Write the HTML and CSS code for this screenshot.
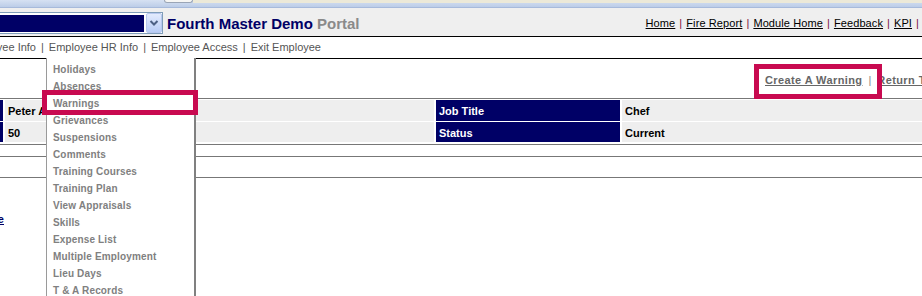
FILE: index.html
```html
<!DOCTYPE html>
<html>
<head>
<meta charset="utf-8">
<title>Fourth Master Demo Portal</title>
<link rel="stylesheet" href="styles.css">
</head>
<body>
<div class="page">
  <div class="chrome">
    <div class="chrome-top">
      <div class="ct-left"></div>
      <div class="ct-tab"></div>
      <div class="ct-right"></div>
    </div>
  </div>

  <header class="header">
    <div class="select">
      <div class="select-value"></div>
      <div class="select-btn">
        <svg width="16" height="20" viewBox="0 0 16 20"><path d="M4.5 8 L8 11.5 L11.5 8" fill="none" stroke="#4d6185" stroke-width="2"/></svg>
      </div>
    </div>
    <div class="title">Fourth Master Demo <span class="portal">Portal</span></div>
    <nav class="toplinks">
      <a href="#">Home</a><span class="tsep">|</span>
      <a href="#">Fire Report</a><span class="tsep">|</span>
      <a href="#">Module Home</a><span class="tsep">|</span>
      <a href="#">Feedback</a><span class="tsep">|</span>
      <a href="#">KPI</a><span class="tsep">|</span>
    </nav>
  </header>

  <nav class="subnav">
    <span class="sub-first">Employee Info</span><span>|</span>
    <span>Employee HR Info</span><span>|</span>
    <span>Employee Access</span><span>|</span>
    <span>Exit Employee</span>
  </nav>

  <main class="content">
    <div class="actions">
      <a href="#">Create A Warning</a><span class="asep">|</span><a href="#">Return To List</a>
    </div>
    <div class="details">
      <div class="lbl">Name</div><div class="val">Peter Andrews</div><div class="lbl">Job Title</div><div class="val">Chef</div>
      <div class="lbl">Employee No</div><div class="val">50</div><div class="lbl">Status</div><div class="val">Current</div>
    </div>
    <div class="gap-a"></div>
    <div class="gap-b"></div>
    <div class="back-row"><a href="#">Back to Employee</a></div>
  </main>

  <ul class="menu">
    <li>Holidays</li>
    <li>Absences</li>
    <li>Warnings</li>
    <li>Grievances</li>
    <li>Suspensions</li>
    <li>Comments</li>
    <li>Training Courses</li>
    <li>Training Plan</li>
    <li>View Appraisals</li>
    <li>Skills</li>
    <li>Expense List</li>
    <li>Multiple Employment</li>
    <li>Lieu Days</li>
    <li>T &amp; A Records</li>
    <li>Documents</li>
  </ul>

  <div class="mark mark-menu"></div>
  <div class="mark mark-action"></div>
</div>
</body>
</html>
```

FILE: styles.css
```css
html, body {
  margin: 0;
  padding: 0;
  height: 296px;
  overflow: hidden;
  background: #fff;
}
body {
  font-family: "Liberation Sans", Arial, sans-serif;
  font-size: 11px;
  color: #000;
}
.page {
  position: relative;
  width: 922px;
  height: 296px;
  overflow: hidden;
}

/* browser-like strip at the very top */
.chrome {
  height: 8px;
  box-sizing: border-box;
  background: linear-gradient(#d6e1f2, #bccde8);
  border-bottom: 1px solid #a7badb;
}
.chrome-top {
  display: flex;
  height: 3px;
}
.ct-left { width: 164px; }
.ct-tab {
  width: 29px;
  box-sizing: border-box;
  background: #f6f6f4;
  border: 1px solid #9aa5b6;
  border-top: 0;
  border-radius: 0 0 3px 3px;
}
.ct-right { flex: 1; background: #ece9d8; }

/* header */
.header {
  display: flex;
  align-items: flex-start;
  height: 28px;
  background: #efefef;
  border-bottom: 1px solid #000;
}
.select {
  display: flex;
  margin-top: 4px;
  margin-left: -60px;
  width: 223px;
  height: 22px;
  box-sizing: border-box;
  border: 1px solid #7f9db9;
  background: #fff;
}
.select-value {
  flex: 1;
  margin: 2px 0 1px 0;
  background: #000066;
}
.select-btn {
  width: 16px;
  height: 20px;
  margin-left: 2px;
  box-sizing: border-box;
  border-radius: 2px;
  background: linear-gradient(#e3ebfd, #b9cdf6);
  border: 1px solid #b7c8ee;
}
.select-btn svg { display: block; margin: -1px 0 0 -1px; }
.title {
  margin-left: 4px;
  margin-top: 7px;
  font-size: 15px;
  line-height: 17px;
  font-weight: bold;
  color: #000066;
  white-space: nowrap;
}
.portal { color: #8a8a8a; }
.toplinks {
  display: flex;
  gap: 4px;
  margin-left: auto;
  margin-top: 9px;
  padding-right: 3px;
  line-height: 13px;
  white-space: nowrap;
  letter-spacing: 0.1px;
}
.toplinks a { color: #000; text-decoration: underline; }
.tsep { color: #7a1040; }

/* sub navigation */
.subnav {
  display: flex;
  gap: 5px;
  height: 21px;
  box-sizing: border-box;
  padding-top: 4px;
  line-height: 13px;
  color: #555;
  white-space: nowrap;
}
.sub-first {
  display: block;
  width: 200px;
  margin-left: -164px;
  text-align: right;
}

/* content */
.content { border-top: 1px solid #000; }
.actions {
  display: flex;
  gap: 6px;
  height: 40px;
  box-sizing: border-box;
  padding: 15px 0 0 765px;
  border-bottom: 1px solid #777;
  line-height: 13px;
  white-space: nowrap;
  font-weight: bold;
}
.actions a { color: #666; text-decoration: underline; letter-spacing: 0.4px; }
.asep { color: #888; font-weight: normal; }

.details {
  display: grid;
  grid-template-columns: 103px 429px 184px 400px;
  grid-template-rows: 21px 20px;
  gap: 1px 2px;
  margin-left: -100px;
  padding: 1px 0 2px;
  border-bottom: 1px solid #777;
  font-weight: bold;
}
.details > div {
  padding: 2px 0 0 3px;
  line-height: 18px;
  white-space: nowrap;
  overflow: hidden;
}
.lbl { background: #000066; color: #fff; }
.val { background: #eeeeee; color: #000; }

.gap-a { height: 11px; border-bottom: 1px solid #777; }
.gap-b { height: 20px; border-bottom: 1px solid #777; }

.back-row {
  width: 200px;
  margin-left: -196px;
  margin-top: 35px;
  text-align: right;
  line-height: 13px;
  font-weight: bold;
}
.back-row a { color: #000066; text-decoration: underline; }

/* dropdown menu overlay */
.menu {
  position: absolute;
  left: 46px;
  top: 58px;
  width: 150px;
  margin: 0;
  padding: 3px 0 0;
  list-style: none;
  box-sizing: border-box;
  background: #fff;
  border-left: 1px solid #9a9a9a;
  border-right: 2px solid #808080;
  height: 260px;
}
.menu li {
  padding-left: 6px;
  line-height: 17px;
  height: 17px;
  font-size: 10px;
  font-weight: bold;
  color: #808080;
  white-space: nowrap;
  letter-spacing: 0.15px;
}

/* highlight annotations */
.mark {
  position: absolute;
  box-sizing: border-box;
  border: 5px solid #c80a50;
}
.mark-menu { left: 42px; top: 90px; width: 156px; height: 25px; }
.mark-action { left: 754px; top: 64px; width: 128px; height: 35px; }
```
